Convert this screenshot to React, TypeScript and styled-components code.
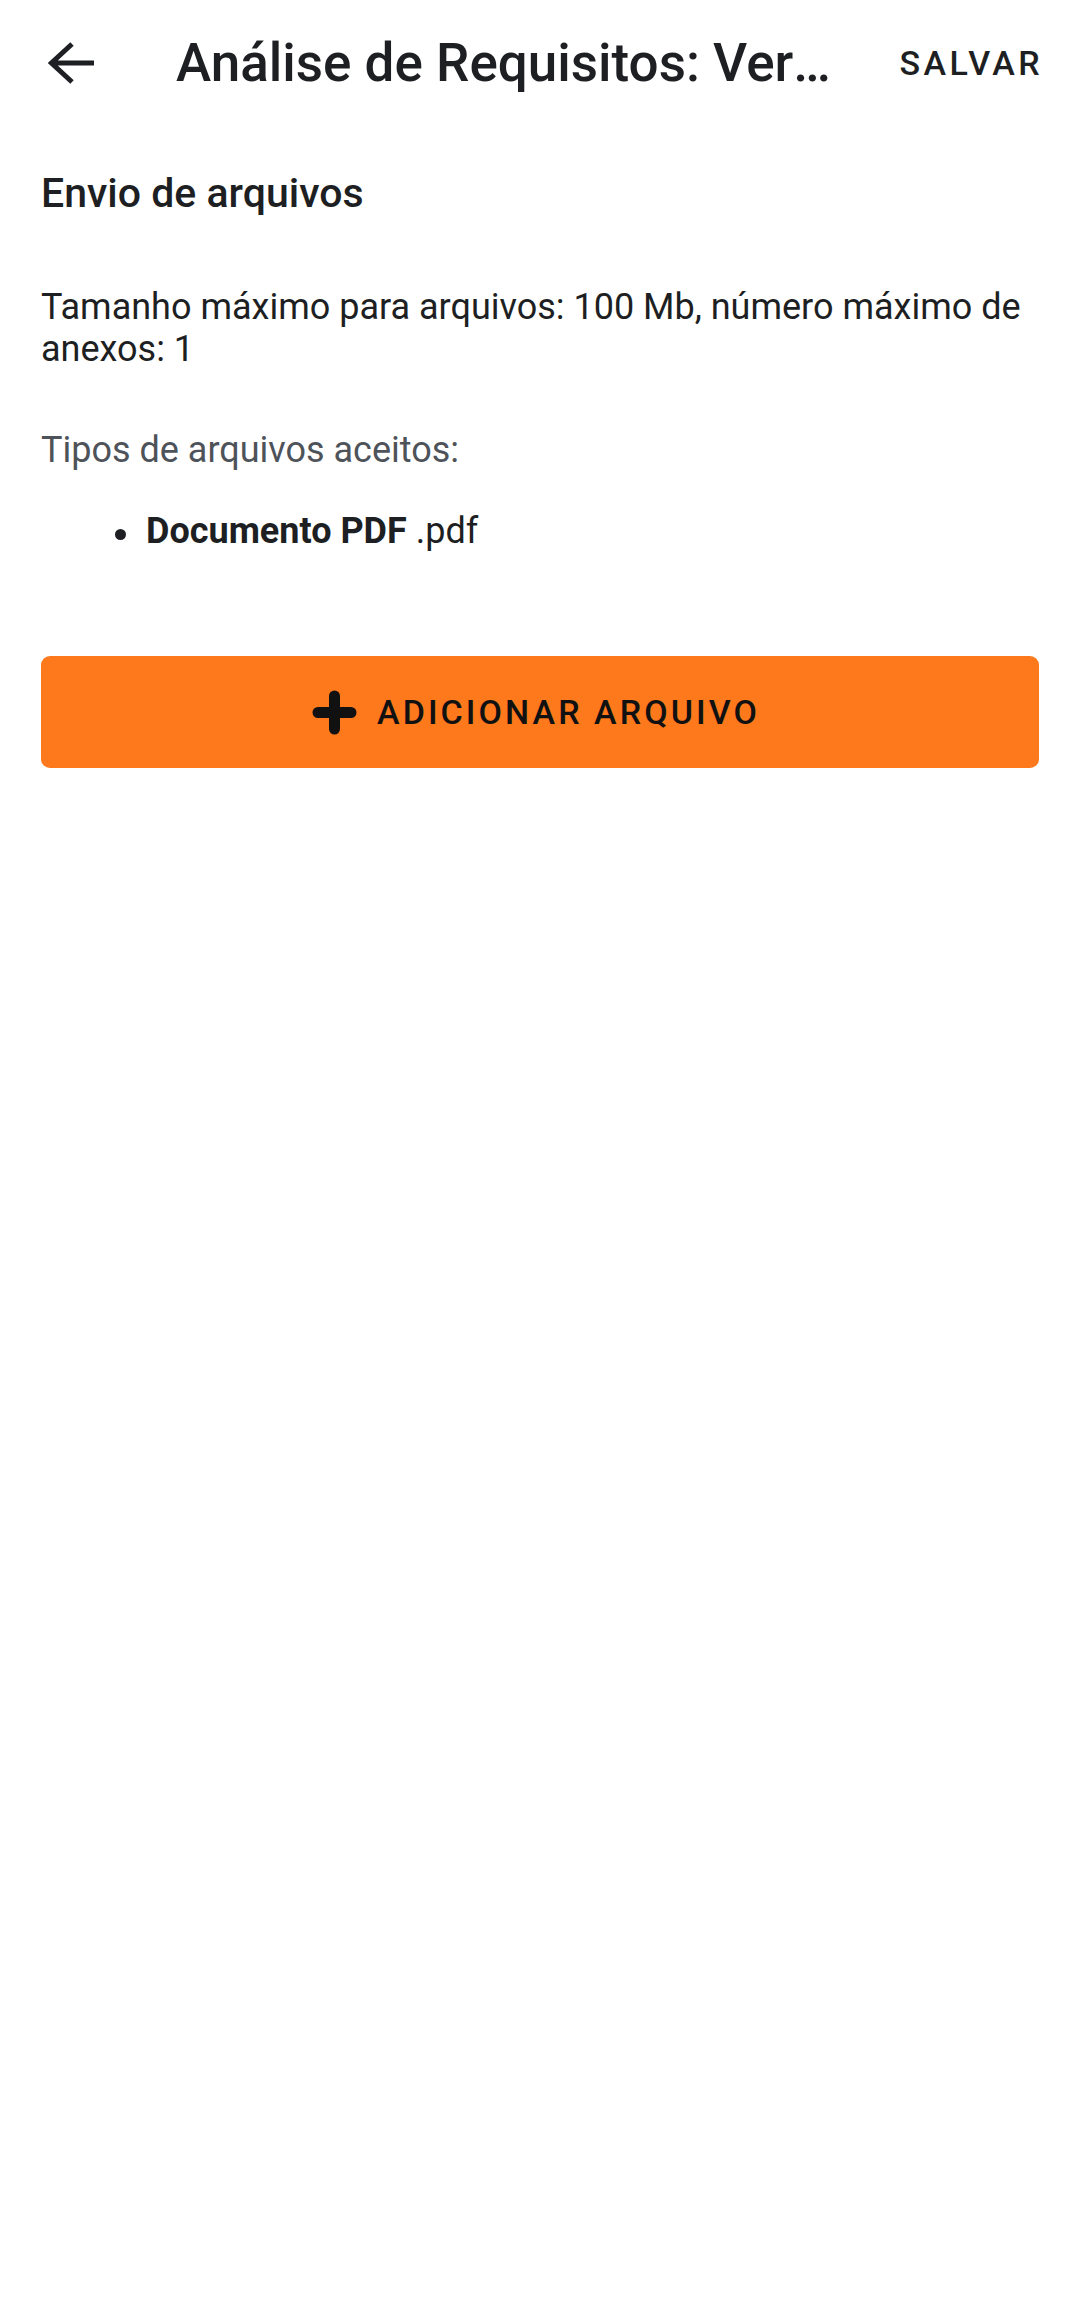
import React from 'react';
import styled, { createGlobalStyle } from 'styled-components';

const GlobalStyle = createGlobalStyle`
  html, body { margin: 0; padding: 0; background: #ffffff; }
  body { font-family: Roboto, "Noto Sans", "Liberation Sans", sans-serif; color: #1d1f23; }
`;

const Page = styled.div`width: 1080px; min-height: 2313px; background: #fff;`;

const TopBar = styled.header`height: 126px; display: flex; align-items: center; padding: 0 37px 0 48px; box-sizing: border-box;`;

const BackButton = styled.button`width: 46px; height: 42px; padding: 0; border: 0; background: none; display: flex; align-items: center; justify-content: center; cursor: pointer;`;

const Title = styled.h1`flex: 0 0 666px; margin: 0 0 0 82px; font-size: 53px; line-height: 62px; font-weight: 500; color: #1d1f23; white-space: nowrap; overflow: hidden; text-overflow: ellipsis;`;

const SaveButton = styled.button`margin-left: auto; border: 0; background: none; padding: 0; font-family: inherit; font-size: 34px; line-height: 42px; font-weight: 500; letter-spacing: 0.1em; color: #1d1f23; cursor: pointer;`;

const Content = styled.main`padding: 43px 41px 0; display: flex; flex-direction: column;`;

const SectionTitle = styled.h2`margin: 0; font-size: 41px; line-height: 48px; font-weight: 500; color: #1d1f23;`;

const Text = styled.p<{ $muted?: boolean; $top: number }>`
  margin: ${p => p.$top}px 0 0; font-size: 36px; line-height: 42px; font-weight: 400;
  color: ${p => (p.$muted ? '#4e535a' : '#1d1f23')};
`;

const TypeList = styled.ul`margin: 39px 0 0; padding: 0 0 0 74px; list-style: none;`;

const TypeItem = styled.li`position: relative; font-size: 36px; line-height: 42px; color: #1d1f23; padding-left: 31px;
  &::before { content: ''; position: absolute; left: 0; top: 19px; width: 11px; height: 11px; border-radius: 50%; background: #1d1f23; }
  b { font-weight: 700; }
`;

const AddButton = styled.button`margin-top: 104px; height: 112px; width: 100%; border: 0; border-radius: 9px; background: #fe781c;
  display: flex; align-items: center; justify-content: center; gap: 20px; padding-right: 14px; font-family: inherit; font-size: 34px; font-weight: 500;
  letter-spacing: 0.09em; color: #111; cursor: pointer;`;

const ArrowIcon = () => (
  <svg width="46" height="42" viewBox="0 0 46 42" fill="none">
    <path d="M46 21H4M24 2L3.5 21L24 40" stroke="#1d1f23" strokeWidth="5" />
  </svg>
);

const PlusIcon = () => (
  <svg width="45" height="45" viewBox="0 0 45 45" fill="none">
    <path d="M22.5 6V39M6 22.5H39" stroke="#111" strokeWidth="11" strokeLinecap="round" />
  </svg>
);

const App = () => (
  <Page>
    <GlobalStyle />
    <TopBar>
      <BackButton aria-label="Voltar"><ArrowIcon /></BackButton>
      <Title>Análise de Requisitos: Versão 1</Title>
      <SaveButton>SALVAR</SaveButton>
    </TopBar>
    <Content>
      <SectionTitle>Envio de arquivos</SectionTitle>
      <Text $top={69}>Tamanho máximo para arquivos: 100 Mb, número máximo de anexos: 1</Text>
      <Text $top={59} $muted>Tipos de arquivos aceitos:</Text>
      <TypeList>
        <TypeItem><b>Documento PDF</b> .pdf</TypeItem>
      </TypeList>
      <AddButton><PlusIcon />ADICIONAR ARQUIVO</AddButton>
    </Content>
  </Page>
);

export default App;
